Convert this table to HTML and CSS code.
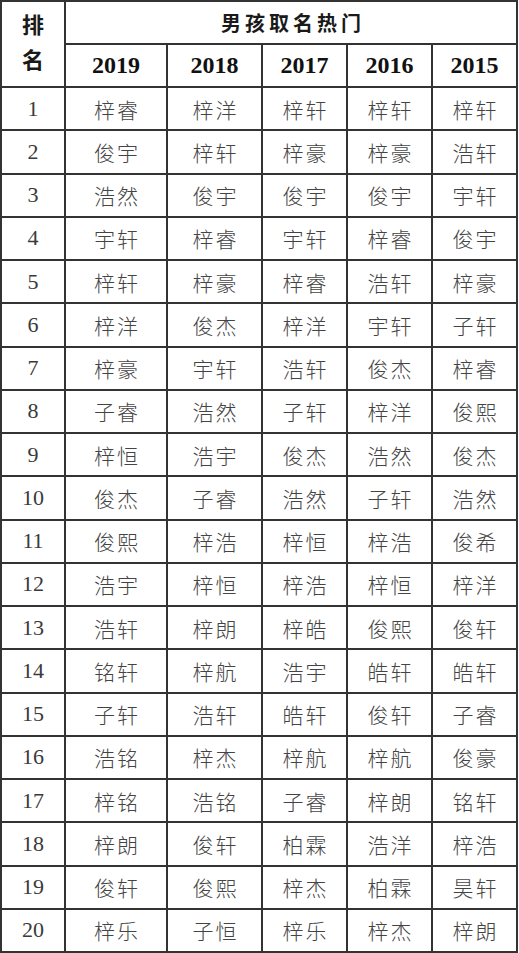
FILE: index.html
```html
<!DOCTYPE html>
<html lang="zh">
<head>
<meta charset="utf-8">
<link rel="stylesheet" href="styles.css">
</head>
<body>
<div class="grid">
  <div class="cell rank-head">排<br>名</div>
  <div class="cell title">男孩取名热门</div>
  <div class="cell year">2019</div><div class="cell year">2018</div><div class="cell year">2017</div><div class="cell year">2016</div><div class="cell year">2015</div>

  <div class="cell num">1</div><div class="cell name">梓睿</div><div class="cell name">梓洋</div><div class="cell name">梓轩</div><div class="cell name">梓轩</div><div class="cell name">梓轩</div>
  <div class="cell num">2</div><div class="cell name">俊宇</div><div class="cell name">梓轩</div><div class="cell name">梓豪</div><div class="cell name">梓豪</div><div class="cell name">浩轩</div>
  <div class="cell num">3</div><div class="cell name">浩然</div><div class="cell name">俊宇</div><div class="cell name">俊宇</div><div class="cell name">俊宇</div><div class="cell name">宇轩</div>
  <div class="cell num">4</div><div class="cell name">宇轩</div><div class="cell name">梓睿</div><div class="cell name">宇轩</div><div class="cell name">梓睿</div><div class="cell name">俊宇</div>
  <div class="cell num">5</div><div class="cell name">梓轩</div><div class="cell name">梓豪</div><div class="cell name">梓睿</div><div class="cell name">浩轩</div><div class="cell name">梓豪</div>
  <div class="cell num">6</div><div class="cell name">梓洋</div><div class="cell name">俊杰</div><div class="cell name">梓洋</div><div class="cell name">宇轩</div><div class="cell name">子轩</div>
  <div class="cell num">7</div><div class="cell name">梓豪</div><div class="cell name">宇轩</div><div class="cell name">浩轩</div><div class="cell name">俊杰</div><div class="cell name">梓睿</div>
  <div class="cell num">8</div><div class="cell name">子睿</div><div class="cell name">浩然</div><div class="cell name">子轩</div><div class="cell name">梓洋</div><div class="cell name">俊熙</div>
  <div class="cell num">9</div><div class="cell name">梓恒</div><div class="cell name">浩宇</div><div class="cell name">俊杰</div><div class="cell name">浩然</div><div class="cell name">俊杰</div>
  <div class="cell num">10</div><div class="cell name">俊杰</div><div class="cell name">子睿</div><div class="cell name">浩然</div><div class="cell name">子轩</div><div class="cell name">浩然</div>
  <div class="cell num">11</div><div class="cell name">俊熙</div><div class="cell name">梓浩</div><div class="cell name">梓恒</div><div class="cell name">梓浩</div><div class="cell name">俊希</div>
  <div class="cell num">12</div><div class="cell name">浩宇</div><div class="cell name">梓恒</div><div class="cell name">梓浩</div><div class="cell name">梓恒</div><div class="cell name">梓洋</div>
  <div class="cell num">13</div><div class="cell name">浩轩</div><div class="cell name">梓朗</div><div class="cell name">梓皓</div><div class="cell name">俊熙</div><div class="cell name">俊轩</div>
  <div class="cell num">14</div><div class="cell name">铭轩</div><div class="cell name">梓航</div><div class="cell name">浩宇</div><div class="cell name">皓轩</div><div class="cell name">皓轩</div>
  <div class="cell num">15</div><div class="cell name">子轩</div><div class="cell name">浩轩</div><div class="cell name">皓轩</div><div class="cell name">俊轩</div><div class="cell name">子睿</div>
  <div class="cell num">16</div><div class="cell name">浩铭</div><div class="cell name">梓杰</div><div class="cell name">梓航</div><div class="cell name">梓航</div><div class="cell name">俊豪</div>
  <div class="cell num">17</div><div class="cell name">梓铭</div><div class="cell name">浩铭</div><div class="cell name">子睿</div><div class="cell name">梓朗</div><div class="cell name">铭轩</div>
  <div class="cell num">18</div><div class="cell name">梓朗</div><div class="cell name">俊轩</div><div class="cell name">柏霖</div><div class="cell name">浩洋</div><div class="cell name">梓浩</div>
  <div class="cell num">19</div><div class="cell name">俊轩</div><div class="cell name">俊熙</div><div class="cell name">梓杰</div><div class="cell name">柏霖</div><div class="cell name">昊轩</div>
  <div class="cell num">20</div><div class="cell name">梓乐</div><div class="cell name">子恒</div><div class="cell name">梓乐</div><div class="cell name">梓杰</div><div class="cell name">梓朗</div>
</div>
</body>
</html>
```

FILE: styles.css
```css
html, body {
  margin: 0;
  padding: 0;
  background: #ffffff;
}

.grid {
  display: grid;
  width: 518px;
  box-sizing: border-box;
  grid-template-columns: 62px 100px 93px 83px 83px 83px;
  grid-template-rows: 41px 41px repeat(20, 41.25px);
  gap: 2px;
  padding: 2px;
  background: #333333;
}

.cell {
  background: #ffffff;
  display: flex;
  align-items: center;
  justify-content: center;
  text-align: center;
}

.rank-head {
  grid-row: 1 / span 2;
  grid-column: 1;
  font-family: "Noto Sans CJK SC", sans-serif;
  font-weight: 700;
  font-size: 22px;
  line-height: 35px;
  padding-bottom: 6px;
  color: #1a1a1a;
}

.title {
  grid-row: 1;
  grid-column: 2 / span 5;
  font-family: "Noto Sans CJK SC", sans-serif;
  font-weight: 700;
  font-size: 20px;
  letter-spacing: 4px;
  padding-left: 4px;
  color: #1a1a1a;
}

.year {
  font-family: "Liberation Serif", "DejaVu Serif", serif;
  font-weight: 700;
  font-size: 24px;
  color: #111111;
}

.num {
  font-family: "Liberation Serif", "DejaVu Serif", serif;
  font-size: 22px;
  color: #3a3a3a;
}

.name {
  font-family: "Noto Sans CJK SC", sans-serif;
  font-weight: 300;
  font-size: 21px;
  letter-spacing: 2px;
  padding-left: 2px;
  color: #444444;
}
```
